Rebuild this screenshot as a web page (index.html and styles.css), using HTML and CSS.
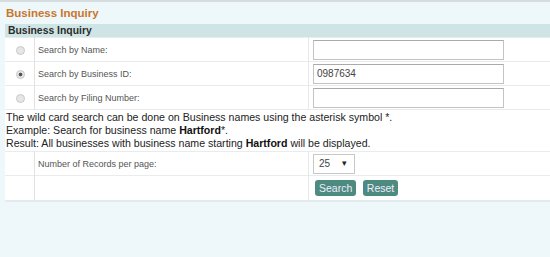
FILE: index.html
```html
<!DOCTYPE html>
<html lang="en">
<head>
    <meta charset="UTF-8">
    <title>Business Inquiry</title>
    <link rel="stylesheet" href="styles.css">
</head>
<body>
    <div class="page">
        <h2 class="page-title">Business Inquiry</h2>
        <div class="panel">
            <div class="panel-head">Business Inquiry</div>
            <table class="inquiry">
                <tr>
                    <td class="col-radio"><input type="radio" name="searchBy"></td>
                    <td class="col-label">Search by Name:</td>
                    <td class="col-field"><input type="text" class="text-field"></td>
                </tr>
                <tr>
                    <td class="col-radio"><input type="radio" name="searchBy" checked></td>
                    <td class="col-label">Search by Business ID:</td>
                    <td class="col-field"><input type="text" class="text-field" value="0987634"></td>
                </tr>
                <tr>
                    <td class="col-radio"><input type="radio" name="searchBy"></td>
                    <td class="col-label">Search by Filing Number:</td>
                    <td class="col-field"><input type="text" class="text-field"></td>
                </tr>
                <tr>
                    <td colspan="3" class="note">
                        The wild card search can be done on Business names using the asterisk symbol *.<br>
                        Example: Search for business name <b>Hartford</b>*.<br>
                        Result: All businesses with business name starting <b>Hartford</b> will be displayed.
                    </td>
                </tr>
                <tr>
                    <td class="col-radio"></td>
                    <td class="col-label">Number of Records per page:</td>
                    <td class="col-field">
                        <span class="select-wrap">
                            <select class="per-page">
                                <option>25</option>
                                <option>50</option>
                                <option>100</option>
                            </select>
                        </span>
                    </td>
                </tr>
                <tr class="actions">
                    <td class="col-radio"></td>
                    <td class="col-label"></td>
                    <td class="col-field">
                        <button class="btn">Search</button>
                        <button class="btn">Reset</button>
                    </td>
                </tr>
            </table>
        </div>
    </div>
</body>
</html>
```

FILE: styles.css
```css
body {
    margin: 0;
    font-family: "Liberation Sans", Arial, sans-serif;
    background-color: #eef8fa;
}
.page {
    border-top: 2px solid #d6dcdd;
    padding: 0 0 0 5px;
}
.page-title {
    margin: 0;
    padding: 3px 0 3px 1px;
    font-size: 11.5px;
    font-weight: bold;
    color: #c9762c;
    height: 16px;
    line-height: 16px;
}
.panel {
    margin-top: 0;
}
.panel-head {
    background: #cfe5e5;
    font-size: 10.4px;
    font-weight: bold;
    color: #2b2b2b;
    padding: 0 3px;
    height: 13px;
    line-height: 13px;
}
.inquiry {
    width: 100%;
    border-collapse: collapse;
    background: #fff;
    border-bottom: 2px solid #e2ecee;
}
.inquiry td {
    border-top: 1px solid #e8ecec;
    padding: 0;
    height: 23px;
    font-size: 9px;
    color: #555;
}
.col-radio {
    width: 29px;
    text-align: center;
    border-right: 1px solid #e2e2e2;
}
.col-radio input {
    -webkit-appearance: none;
    appearance: none;
    margin: 0 0 0 2px;
    width: 9px;
    height: 9px;
    border-radius: 50%;
    border: 1px solid #c8c8c8;
    background: #e6e6e6;
    vertical-align: middle;
}
.col-radio input:checked {
    background: radial-gradient(circle, #555 0, #555 1.6px, #e6e6e6 2.2px);
}
.col-label {
    width: 270px;
    padding-left: 3px !important;
    border-right: 1px solid #e8e8e8;
}
.col-field {
    padding-left: 4px !important;
}
.text-field {
    width: 191px;
    height: 20px;
    box-sizing: border-box;
    border: 1px solid #c4c4c4;
    border-top-color: #aaa;
    font-family: "Liberation Sans", Arial, sans-serif;
    font-size: 10px;
    color: #444;
    padding: 1px 3px;
    vertical-align: middle;
}
.note {
    font-size: 10.6px !important;
    color: #222 !important;
    line-height: 13px;
    padding: 1px 0 1px 1px !important;
    height: auto !important;
}
.note b {
    color: #111;
}
.select-wrap {
    position: relative;
    display: inline-block;
    vertical-align: middle;
}
.select-wrap::after {
    content: "\25BE";
    position: absolute;
    right: 8px;
    top: 4px;
    font-size: 9px;
    color: #222;
    pointer-events: none;
}
.per-page {
    -webkit-appearance: none;
    appearance: none;
    width: 42px;
    height: 20px;
    border: 1px solid #c8c8c8;
    border-radius: 0;
    background: #fff;
    font-family: "Liberation Sans", Arial, sans-serif;
    font-size: 10px;
    color: #444;
    padding: 0 0 0 5px;
    display: block;
}
.actions td {
    height: 24px;
}
.btn {
    background: #4d8a7f;
    color: #eef;
    border: none;
    border-radius: 3px;
    font-family: "Liberation Sans", Arial, sans-serif;
    font-size: 10.5px;
    padding: 2px 4px;
    height: 16px;
    line-height: 12px;
    margin: 0 2px 0 2px;
    vertical-align: middle;
    cursor: pointer;
}
```
